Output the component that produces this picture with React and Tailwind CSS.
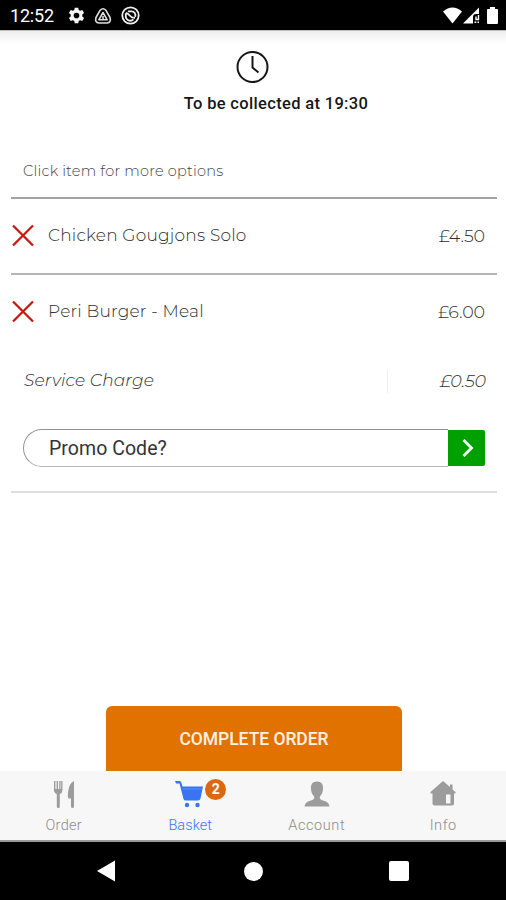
import React from "react";

function StatusBar() {
  return (
    <header className="flex h-[30px] shrink-0 items-center bg-black pt-px pl-[10px] pr-[8px] text-white">
      <span className="w-[58px] whitespace-nowrap text-[18px] leading-[30px] tracking-[-0.2px]">12:52</span>
      <svg className="h-[17px] w-[17px]" viewBox="0 0 24 24" fill="#f5f5f5">
        <path fillRule="evenodd" d="M9.5 1h5l.6 3.3 2 1.100 3.100-1.200 2.500 4.300-2.500 2.200v2.600l2.500 2.200-2.500 4.300-3.100-1.200-2 1.100-.6 3.300h-5l-.6-3.300-2-1.100-3.100 1.200-2.500-4.300 2.500-2.200v-2.600L1.300 8.500l2.500-4.300 3.100 1.200 2-1.100ZM12 8a4 4 0 1 0 0 8 4 4 0 0 0 0-8Z" />
      </svg>
      <svg className="ml-[9px] h-[18px] w-[18px]" viewBox="0 0 18 18" fill="none" stroke="#dedede" strokeWidth="1.600" strokeLinejoin="round">
        <path d="M6.200 3.200Q9 .2 11.800 3.200L16 10.500Q17.500 15.500 13 16H5Q.5 15.500 2 10.500Z" />
        <path d="M9 5.500 13.200 12.800H4.800Z" />
        <path d="M9 9v3" />
      </svg>
      <svg className="ml-[9px] h-[19px] w-[19px]" viewBox="0 0 19 19" fill="none" stroke="#eeeeee" strokeWidth="1.800">
        <circle cx="9.500" cy="9.500" r="8.200" />
        <path d="M4.800 6.800Q7 7.200 8.700 9.600T14 11.800M6.800 5.300h3.700a4 4 0 0 1 3.600 5.500M4.800 7.300v2.200a4.500 4.500 0 0 0 7.600 3.900" />
      </svg>
      <svg className="ml-auto h-[17px] w-[19px]" viewBox="0 0 19 17" fill="#fff">
        <path d="M0 4.500Q9.500-3.500 19 4.500L9.500 16.500Z" />
      </svg>
      <svg className="ml-[1px] h-[17px] w-[17px]" viewBox="0 0 17 17" fill="#fff">
        <path d="M0 16.500 16 .5V7h-3a3 3 0 0 0-3 3v6.500Z" />
        <path d="M15.500 8v4.500h-2.500V9.500M11.500 15.200h1.800M14.500 15.200h1.500" fill="none" stroke="#fff" strokeWidth="1.400" />
      </svg>
      <svg className="ml-[7px] h-[17px] w-[11px]" viewBox="0 0 11 18" preserveAspectRatio="none" fill="#fff">
        <path d="M3 0h5v2h2q1 0 1 1v14q0 1-1 1H1q-1 0-1-1V3q0-1 1-1h2Z" />
      </svg>
    </header>
  );
}

function RemoveIcon() {
  return (
    <svg className="mt-[-1px] h-[23px] w-[24px] shrink-0" viewBox="0 0 23 23" fill="none" stroke="#c51a10" strokeWidth="2.300">
      <path d="M1.500 1.500 21.500 21.500M21.500 1.500 1.500 21.500" />
    </svg>
  );
}

function BasketItem({ name, price, nameClass }) {
  return (
    <div className="flex h-[74px] items-center">
      <RemoveIcon />
      <span className={"ml-[13px] text-[17px] font-light whitespace-nowrap " + nameClass}>{name}</span>
      <span className="mr-[12px] ml-auto text-[17.500px] font-light tracking-[-0.1px]">{price}</span>
    </div>
  );
}

function TabItem({ label, labelClass, children }) {
  return (
    <div className="flex flex-1 flex-col items-center pt-[8px]">
      <div className="flex h-[30px] w-[60px] items-center justify-center">{children}</div>
      <span className={"mt-[7px] ml-px text-[14.500px] leading-[20px] font-light " + labelClass}>{label}</span>
    </div>
  );
}

export default function App() {
  return (
    <div className="flex h-[900px] w-[506px] flex-col overflow-hidden bg-white font-['Roboto',sans-serif]">
      <StatusBar />
      <div className="h-[14px] shrink-0 border-t border-[#bdbdbd] bg-gradient-to-b from-[#eeeeee] to-white" />

      <main className="flex h-[727px] shrink-0 flex-col pr-[9px] pl-[11px]">
        <div className="flex h-[80px] flex-col items-center pt-[6px] pr-[2px]">
          <svg className="h-[34px] w-[34px]" viewBox="0 0 34 34" fill="none" stroke="#161616" strokeWidth="2">
            <circle cx="16.500" cy="17" r="15" />
            <path d="M16.500 6v11.500l6 5" />
          </svg>
          <p className="mt-[9px] ml-[46px] text-[16.500px] leading-[22px] font-medium tracking-[0.330px] whitespace-nowrap text-[#171717]">To be collected at 19:30</p>
        </div>

        <div className="font-['Montserrat',sans-serif] text-[#303030]">
          <div className="flex h-[75px] items-center border-b-2 border-[#a3a3a3] pl-[12px] pt-[23px]">
            <span className="text-[14.500px] font-light tracking-[0.230px] whitespace-nowrap text-[#444]">Click item for more options</span>
          </div>
          <BasketItem name="Chicken Gougjons Solo" price="£4.50" nameClass="tracking-[0.21px]" />
          <div className="h-[2px] bg-[#b5b5b5]" />
          <BasketItem name="Peri Burger - Meal" price="£6.00" nameClass="tracking-[0.2px]" />
          <div className="flex h-[64px] items-center pr-[11px] pl-[13px] text-[17px] font-light italic">
            <span className="tracking-[0.14px]">Service Charge</span>
            <span className="ml-auto h-[23px] w-px bg-[#eeeeee]" />
            <span className="flex w-[98px] justify-end text-[17.500px] tracking-[-0.1px]">£0.50</span>
          </div>
        </div>

        <div className="mt-[16px] ml-[12px] flex h-[38px] w-[462px] shrink-0">
          <div className="flex flex-1 items-center rounded-l-[19px] border border-r-0 border-[#929292] border-b-[#b5b5b5] pt-px pl-[25px]">
            <span className="text-[19.500px] tracking-[0.050px] text-[#333]">Promo Code?</span>
          </div>
          <div className="mt-px flex h-[36px] w-[37px] items-center justify-center rounded-r-[2px] bg-[#00a000]">
            <svg className="h-[20px] w-[14px]" viewBox="0 0 14 20" fill="none" stroke="#f5fff5" strokeWidth="2.800">
              <path d="M3.500 2 11.500 10 3.500 18" />
            </svg>
          </div>
        </div>
        <div className="mt-[24px] h-[2px] shrink-0 bg-[#dedede]" />
        <button className="mt-auto ml-[95px] h-[65px] w-[296px] shrink-0 rounded-t-[6px] bg-[#e27200] pt-[2px] text-[17.500px] font-medium tracking-[-0.050px] whitespace-nowrap text-[#fff1e6]">COMPLETE ORDER</button>
      </main>

      <nav className="flex h-[71px] shrink-0 border-b-2 border-[#9a9a9a] bg-[#f7f7f7] text-[#8c8c8c]">
        <TabItem label="Order" labelClass="tracking-[0.3px]">
          <svg className="ml-px h-[27px] w-[22px]" viewBox="0 0 22 27" fill="#9c9c9c">
            <path d="M1 0h1.400v8h1.200V0H5v8h1.200V0h1.400v8h.6V0h1.300v9q0 3-2.700 4v12.500q0 1.500-1.500 1.500t-1.500-1.500V13Q1 12 1 9Z" />
            <path d="M21 0v25.500q0 1.500-1.500 1.500T18 25.500V17.500H15.500q-1-1.500-.5-6Q16 2 21 0Z" />
          </svg>
        </TabItem>
        <TabItem label="Basket" labelClass="tracking-[0.1px] text-[#3975f3]">
          <div className="relative h-[27px] w-[29px]">
            <svg className="h-[27px] w-[29px]" viewBox="0 0 29 27" fill="#3975f3">
              <path d="M0 0h4.500Q6 0 6.500 2L7.500 5.500H28L25.500 17.500Q25 19.500 23 19.500H10.500Q9 19.500 8.500 18L4.500 2.500H1Z" />
              <path d="M8 8H27" stroke="#6292f5" strokeWidth="0.800" />
              <circle cx="12" cy="24" r="2.200" />
              <circle cx="22.500" cy="24" r="2.200" />
            </svg>
            <span className="absolute top-[-2px] left-[30px] flex h-[21px] w-[21px] items-center justify-center rounded-full bg-[#db6812] pt-px text-[14px] font-bold text-white">2</span>
          </div>
        </TabItem>
        <TabItem label="Account" labelClass="tracking-[0.6px]">
          <svg className="ml-px h-[26px] w-[26px]" viewBox="0 0 26 26" fill="#9c9c9c">
            <path d="M13 .5c4.500 0 6.500 3 6 7.500q-.3 5-3.200 7.500v2q1 1.500 4.700 2.500 4.500 1.300 5 5.500H.5q.5-4.200 5-5.500 3.700-1 4.700-2.500v-2Q7.300 13 7 8C6.500 3.500 8.500.5 13 .5Z" />
          </svg>
        </TabItem>
        <TabItem label="Info" labelClass="tracking-[0.6px]">
          <svg className="ml-px h-[26px] w-[26px]" viewBox="0 0 26 26" fill="#9c9c9c">
            <path fillRule="evenodd" d="M13 0 20 6V3.500h2.500v5L25.500 11v1.500H24v10q0 2-2 2H4.500q-2 0-2-2v-10H.5V11ZM16 13.500v9h4.500v-9Z" />
          </svg>
        </TabItem>
      </nav>

      <footer className="flex h-[58px] shrink-0 items-center bg-black pl-[97px]">
        <svg className="h-[22px] w-[18px]" viewBox="0 0 18 22" fill="#fff">
          <path d="M0 11 18 .5v21Z" />
        </svg>
        <span className="ml-[129px] h-[19px] w-[19px] rounded-full bg-white" />
        <span className="ml-[126px] h-[20px] w-[20px] rounded-[2px] bg-white" />
      </footer>
    </div>
  );
}
